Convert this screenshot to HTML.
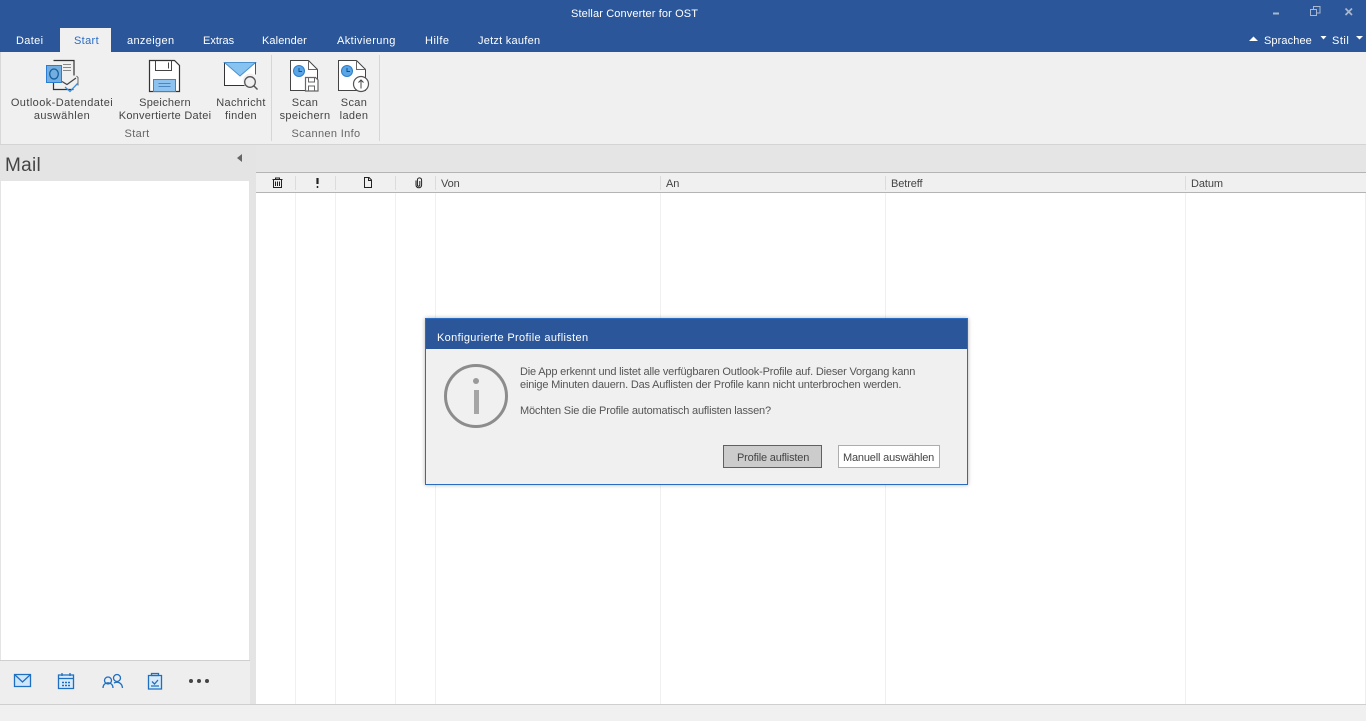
<!DOCTYPE html>
<html lang="de"><head><meta charset="utf-8"><title>Stellar Converter for OST</title>
<style>
html,body{margin:0;padding:0;width:1366px;height:721px;overflow:hidden;background:#fff}
body{position:relative;font-family:"Liberation Sans",sans-serif;font-size:11px;color:#444}
.a{position:absolute}
.t{position:absolute;white-space:nowrap;line-height:13px}
.c{transform:translateX(-50%);text-align:center}
.w{color:#fff}
.d{font-size:11px;letter-spacing:-.18px;color:#555}
.h{font-size:11px;letter-spacing:-.1px;color:#444}
.sep{position:absolute;width:1px;background:#f0f0f0;top:193px;height:511px}
.hs{position:absolute;width:1px;background:#dcdcdc;top:176px;height:14px}
svg{position:absolute;overflow:visible}
</style></head><body>
<div class="a" style="left:0;top:0;width:1366px;height:52px;background:#2b579a"></div>
<div class="t w" style="left:571px;top:8px;letter-spacing:.12px">Stellar Converter for OST</div>

<svg style="left:1220px;top:0" width="146" height="30" fill="none" stroke="#aab8cf">
<path d="M53 13.500h6" stroke-width="2"/>
<path d="M90.500 9.500h6v6h-6zM93.500 9v-2.500h6.500v6.500h-3" stroke-width="1"/>
<path d="M125.500 8.500l6.500 6.500M132 8.500l-6.500 6.500" stroke-width="1.700"/>
</svg>

<div class="t w" style="left:16px;top:35px;letter-spacing:.35px">Datei</div>
<div class="a" style="left:60px;top:28px;width:51px;height:25px;background:#f0f0f0"></div>
<div class="t" style="left:74px;top:35px;letter-spacing:.35px;color:#2b6cc4">Start</div>
<div class="t w" style="left:127px;top:35px;letter-spacing:.35px">anzeigen</div>
<div class="t w" style="left:203px;top:35px;letter-spacing:0">Extras</div>
<div class="t w" style="left:262px;top:35px;letter-spacing:.1px">Kalender</div>
<div class="t w" style="left:337px;top:35px;letter-spacing:.4px">Aktivierung</div>
<div class="t w" style="left:425px;top:35px;letter-spacing:.5px">Hilfe</div>
<div class="t w" style="left:478px;top:35px;letter-spacing:.25px">Jetzt kaufen</div>
<svg style="left:1249px;top:35px" width="117" height="10" fill="#fff"><path d="M0 6l4.500-4.500L9 6z"/><path d="M71.500 1h6l-3 3.500zM107 1h7l-3.500 3.500z"/></svg>
<div class="t w" style="left:1264px;top:35px;letter-spacing:.1px">Sprachee</div>
<div class="t w" style="left:1332px;top:35px;letter-spacing:.5px">Stil</div>

<div class="a" style="left:0;top:52px;width:1366px;height:93px;background:#f0f0f0;border-bottom:1px solid #d4d4d4;box-sizing:border-box"></div>
<div class="a" style="left:0;top:52px;width:1px;height:92px;background:#d8d8d8"></div>
<div class="a" style="left:271px;top:55px;width:1px;height:86px;background:#d6d6d6"></div>
<div class="a" style="left:379px;top:55px;width:1px;height:86px;background:#d6d6d6"></div>

<!-- Outlook icon -->
<svg style="left:45px;top:59px" width="36" height="36" fill="none">
<path d="M8.500 1.500h20.500v15" stroke="#333" stroke-width="1.200"/>
<path d="M8.500 24v6.500h20" stroke="#333" stroke-width="1.200"/>
<path d="M17 22.500l5 3 9-6.500" stroke="#444" stroke-width="1.200"/>
<path d="M31.500 17l1.500 1.500v8" stroke="#666"/>
<path d="M18 5.500h8M18 8.500h8M18 11.500h8" stroke="#888"/>
<rect x="1.500" y="6.500" width="15" height="17" fill="#74aee0" stroke="#2b7cd3"/>
<ellipse cx="9" cy="15" rx="4.300" ry="5" stroke="#14609f" stroke-width="1.300"/>
<path d="M20 28l5 4.500 8-8.500" stroke="#3c8fd8" stroke-width="1.300"/>
</svg>
<div class="t c" style="left:62px;top:97px;letter-spacing:.42px">Outlook-Datendatei<br>auswählen</div>

<!-- Save icon -->
<svg style="left:149px;top:60px" width="32" height="32" fill="none">
<path d="M.5.500h25l5 5v26H.5z" fill="#fff" stroke="#333" stroke-width="1.200"/>
<path d="M6.500.500v10h16V.500M19.500 2.500v6" stroke="#444"/>
<rect x="4.500" y="19.500" width="22" height="12" fill="#8fc3ef" stroke="#3f85c6"/>
<path d="M9.500 23.500h12M9.500 26.500h12" stroke="#4a86bf"/>
</svg>
<div class="t c" style="left:165px;top:97px;letter-spacing:.25px">Speichern<br>Konvertierte Datei</div>

<!-- Find message icon -->
<svg style="left:224px;top:62px" width="34" height="28" fill="none">
<path d="M.500 1h31v13a7 7 0 0 0-11 9.500H.5z" fill="#fff"/>
<path d="M.5.500v23h20" stroke="#333"/>
<path d="M.5.500h31L16 14z" fill="#86c3f0" stroke="#4a90cc"/>
<path d="M31.500.500v12" stroke="#555"/>
<circle cx="26" cy="20" r="5.300" stroke="#555" stroke-width="1.300"/>
<path d="M30 24l3.500 3.500" stroke="#555" stroke-width="1.500"/>
</svg>
<div class="t c" style="left:241px;top:97px;letter-spacing:.35px">Nachricht<br>finden</div>

<!-- Scan save -->
<svg style="left:290px;top:60px" width="30" height="32" fill="none">
<path d="M.5.500h18l9 9v21H.5z" fill="#fff" stroke="#444"/>
<path d="M18.500.500v9h9" stroke="#666"/>
<circle cx="9" cy="11" r="5.500" fill="#5aa5e6" stroke="#2d7ec8"/>
<path d="M9 8v3.500h3" stroke="#124f8c"/>
<path d="M15.500 17.500h10l2.500 2.500v11h-12.500z" fill="#fff" stroke="#666" stroke-width="1.200"/>
<path d="M18.500 18v4h6v-4M18.500 31v-5h6v5" stroke="#666"/>
</svg>
<div class="t c" style="left:305px;top:97px;letter-spacing:.35px">Scan<br>speichern</div>

<!-- Scan load -->
<svg style="left:338px;top:60px" width="32" height="34" fill="none">
<path d="M.5.500h18l9 9v21H.5z" fill="#fff" stroke="#444"/>
<path d="M18.500.500v9h9" stroke="#666"/>
<circle cx="9" cy="11" r="5.500" fill="#5aa5e6" stroke="#2d7ec8"/>
<path d="M9 8v3.500h3" stroke="#124f8c"/>
<circle cx="23" cy="24" r="7.500" fill="#fff" stroke="#555" stroke-width="1.200"/>
<path d="M23 28.500v-8.500M20.500 22.500l2.500-2.500 2.500 2.500" stroke="#444"/>
</svg>
<div class="t c" style="left:354px;top:97px;letter-spacing:.35px">Scan<br>laden</div>

<div class="t c" style="left:137px;top:128px;letter-spacing:.35px;color:#666">Start</div>
<div class="t c" style="left:326px;top:128px;letter-spacing:.35px;color:#666">Scannen Info</div>

<!-- Left pane -->
<div class="a" style="left:0;top:145px;width:256px;height:559px;background:#e4e4e4"></div>
<div class="a" style="left:1px;top:181px;width:248px;height:479px;background:#fff"></div>
<div class="a" style="left:0;top:660px;width:250px;height:44px;background:#eeeeee;border-top:1px solid #cfcfcf;box-sizing:border-box"></div>
<div class="t" style="left:5px;top:155px;font-size:19px;line-height:22px;color:#444;letter-spacing:.3px">Mail</div>
<svg style="left:237px;top:154px" width="6" height="8"><path d="M5 0v8L0 4z" fill="#666"/></svg>

<svg style="left:0;top:660px" width="220" height="44" fill="none" stroke="#1f6fc0" stroke-width="1.300">
<path d="M14.500 14.500h16v12h-16z" fill="#cfe5f8"/><path d="M14.500 14.500l8 7.500 8-7.500"/>
<path d="M58.500 15h15v13.500h-15z" fill="#d9ebfa"/><path d="M58.500 18.500h15M62 13v3M70 13v3"/>
<path d="M62 22.500h8M62 25.500h8" stroke-dasharray="2 1" stroke-width="1.500"/>
<circle cx="108" cy="20.500" r="3.500"/><path d="M103 28c0-7 10-7 10 0"/>
<circle cx="117" cy="18" r="3.500"/><path d="M114 23c4-2 8 0 8.500 5"/>
<path d="M148.500 15.500h13v13.500h-13z" fill="#d9ebfa"/><path d="M151.500 13.500h7v2h-7zM152 21.500l2.500 2.500 3.500-4M151 26h8"/>
<g fill="#444" stroke="none"><circle cx="191" cy="21" r="2"/><circle cx="199" cy="21" r="2"/><circle cx="207" cy="21" r="2"/></g>
</svg>

<!-- Right pane -->
<div class="a" style="left:256px;top:145px;width:1110px;height:27px;background:#e5e5e5"></div>
<div class="a" style="left:256px;top:172px;width:1110px;height:21px;background:#f0f0f0;border-top:1px solid #b4b4b4;border-bottom:1px solid #b4b4b4;box-sizing:border-box"></div>
<div class="hs" style="left:295px"></div><div class="hs" style="left:335px"></div><div class="hs" style="left:395px"></div><div class="hs" style="left:435px"></div><div class="hs" style="left:660px"></div><div class="hs" style="left:885px"></div><div class="hs" style="left:1185px"></div>
<div class="sep" style="left:295px"></div><div class="sep" style="left:335px"></div><div class="sep" style="left:395px"></div><div class="sep" style="left:435px"></div><div class="sep" style="left:660px"></div><div class="sep" style="left:885px"></div><div class="sep" style="left:1185px"></div>

<svg style="left:272px;top:177px" width="160" height="12" fill="none" stroke="#222">
<path d="M.5 2.500h10M3.500 2.500v-1.500h4v1.500M1.500 2.500v8h8v-8M3.500 4.500v4.500M5.500 4.500v4.500M7.500 4.500v4.500"/>
<path d="M45.500 1v6" stroke-width="2.200"/><path d="M45.500 9v2" stroke-width="1.500"/>
<path d="M92.500 .5h4.500l2.500 2.500v7.500h-7zM96.500 .5v3h3"/>
<path d="M144 3.500v4.500a2.800 2.800 0 0 0 5.600 0v-5a2.100 2.100 0 0 0-4.200 0v5a1 1 0 0 0 2.400 0v-4" stroke-width="1"/>
</svg>
<div class="t h" style="left:441px;top:178px">Von</div>
<div class="t h" style="left:666px;top:178px">An</div>
<div class="t h" style="left:891px;top:178px">Betreff</div>
<div class="t h" style="left:1191px;top:178px">Datum</div>

<div class="a" style="left:1365px;top:193px;width:1px;height:511px;background:#eee"></div>
<div class="a" style="left:0;top:704px;width:1366px;height:17px;background:#f0f0f0;border-top:1px solid #cfcfcf;box-sizing:border-box"></div>

<!-- Dialog -->
<div class="a" style="left:425px;top:318px;width:543px;height:167px;background:#f0f0f0;border:1px solid #2b6cc0;box-sizing:border-box;box-shadow:0 0 4px rgba(0,0,0,.3)">
<div class="a" style="left:0;top:0;width:541px;height:30px;background:#2b579a"></div>
</div>
<div class="t w" style="left:437px;top:332px;letter-spacing:.35px">Konfigurierte Profile auflisten</div>
<svg style="left:444px;top:364px" width="64" height="64" fill="none">
<circle cx="32" cy="32" r="30.500" stroke="#8c8c8c" stroke-width="3"/>
<circle cx="32" cy="17" r="3" fill="#9a9a9a"/>
<rect x="30" y="26" width="5" height="24" fill="#a5a5a5"/>
</svg>
<div class="t d" style="left:520px;top:366px">Die App erkennt und listet alle verfügbaren Outlook-Profile auf. Dieser Vorgang kann</div>
<div class="t d" style="left:520px;top:379px">einige Minuten dauern. Das Auflisten der Profile kann nicht unterbrochen werden.</div>
<div class="t d" style="left:520px;top:405px">Möchten Sie die Profile automatisch auflisten lassen?</div>
<div class="a" style="left:723px;top:445px;width:99px;height:23px;background:#cccccc;border:1px solid #1f6fc0;box-sizing:border-box"></div>
<div class="t d" style="left:737px;top:452px;color:#444">Profile auflisten</div>
<div class="a" style="left:838px;top:445px;width:102px;height:23px;background:#fff;border:1px solid #adadad;box-sizing:border-box"></div>
<div class="t d" style="left:843px;top:452px;color:#444">Manuell auswählen</div>
</body></html>
